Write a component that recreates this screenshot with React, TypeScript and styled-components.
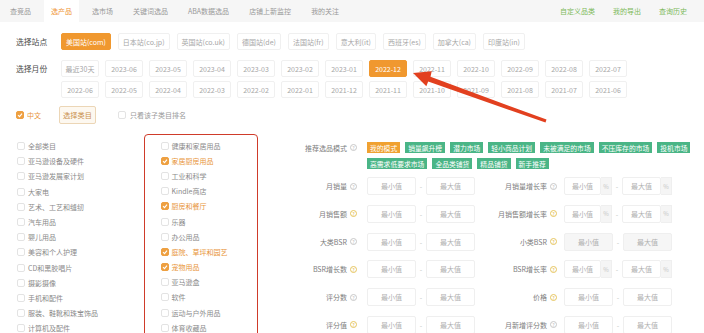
import React from 'react'
import styled, {createGlobalStyle} from 'styled-components'

const GlobalStyle = createGlobalStyle`
  body {
    margin: 0;
    background: #fff;
    font-family: "Noto Sans CJK SC", "Noto Sans", sans-serif;
  }
`

const Page = styled.div`
  position: relative;
  width: 704px;
  height: 333px;
  overflow: hidden;
  background: #fff;
`

const Nav = styled.div`
  display: flex;
  align-items: stretch;
  height: 22px;
  padding: 0 17px 0 3px;
  background: #f6f6f6;
  font-size: 7px;
`
const NavTab = styled.div<{ $active?: boolean }>`
  display: flex;
  align-items: center;
  padding: 0 7px;
  margin-right: 6px;
  color: ${(p) => (p.$active ? '#ef9433' : '#999')};
  background: ${(p) => (p.$active ? '#fff' : 'transparent')};
`
const NavRight = styled.div`
  margin-left: auto;
  display: flex;
  align-items: center;
  gap: 18px;
  color: #7cb95a;
`

const Content = styled.div`
  padding-left: 16px;
`
const FilterRow = styled.div<{ $top: number }>`
  display: flex;
  align-items: flex-start;
  margin-top: ${(p) => p.$top}px;
`
const RowLabel = styled.div`
  width: 45px;
  flex: none;
  line-height: 17px;
  font-size: 7.8px;
  color: #4a4a4a;
`
const SiteList = styled.div`
  display: flex;
  gap: 7px;
`
const Chip = styled.div<{ $active?: boolean }>`
  height: 17px;
  box-sizing: border-box;
  padding: 0 4px;
  display: flex;
  align-items: center;
  justify-content: center;
  border: 1px solid ${(p) => (p.$active ? '#f0982f' : '#f0f0f0')};
  border-radius: 2px;
  background: ${(p) => (p.$active ? '#f0982f' : '#fff')};
  color: ${(p) => (p.$active ? '#fff' : '#a6a6a6')};
  font-size: 7px;
  white-space: nowrap;
`
const MonthGrid = styled.div`
  display: grid;
  grid-template-columns: repeat(13, 38px);
  column-gap: 6px;
  row-gap: 4px;
`

const OptionRow = styled.div`
  display: flex;
  align-items: center;
  height: 18px;
  margin-top: 8px;
  font-size: 7px;
`
const CheckLabel = styled.label<{ $checked?: boolean; $gap?: number }>`
  display: flex;
  align-items: center;
  gap: ${(p) => p.$gap ?? 3}px;
  color: ${(p) => (p.$checked ? '#e8953a' : '#999')};
`
const PickButton = styled.div`
  margin: 0 22px 0 18px;
  width: 37px;
  height: 18px;
  box-sizing: border-box;
  display: flex;
  align-items: center;
  justify-content: center;
  border: 1px solid #ecd6b6;
  border-radius: 2px;
  background: #fdf8f0;
  color: #c98f4c;
  font-size: 7.2px;
`
const Box = styled.span<{ $checked?: boolean }>`
  width: 8px;
  height: 8px;
  flex: none;
  box-sizing: border-box;
  display: inline-flex;
  align-items: center;
  justify-content: center;
  border: 1px solid ${(p) => (p.$checked ? '#eea041' : '#e3e3e3')};
  border-radius: 2px;
  background: ${(p) => (p.$checked ? '#eea041' : '#fff')};
`

const Body = styled.div`
  display: flex;
  margin-top: 10px;
`
const LeftCol = styled.div`
  width: 128px;
  flex: none;
  box-sizing: border-box;
  padding: 4.5px 0 0 1px;
`
const RedBox = styled.div`
  width: 114px;
  flex: none;
  box-sizing: border-box;
  padding: 3px 0 40px 15.5px;
  border: 1.5px solid #cf3b2a;
  border-radius: 4px;
`
const CatItem = styled.div<{ $checked?: boolean }>`
  display: flex;
  align-items: center;
  gap: 3px;
  height: 15.2px;
  font-size: 7px;
  white-space: nowrap;
  color: ${(p) => (p.$checked ? '#e8953a' : '#8a8a8a')};
`

const RightCol = styled.div`
  flex: 1;
  padding-top: 8px;
`
const RecommendRow = styled.div`
  display: flex;
  align-items: flex-start;
`
const FieldLabel = styled.div<{ $pad: number; $w?: number }>`
  width: ${(p) => (p.$w ? `${p.$w}px` : 'auto')};
  box-sizing: border-box;
  display: flex;
  align-items: center;
  justify-content: flex-end;
  gap: 3px;
  padding-right: ${(p) => p.$pad}px;
  height: 11px;
  font-size: 7px;
  color: #7d7d7d;
  white-space: nowrap;
`
const TagList = styled.div`
  width: 330px;
  display: flex;
  flex-wrap: wrap;
  gap: 5px;
`
const Tag = styled.div<{ $mine?: boolean }>`
  height: 11px;
  padding: 0 3px;
  display: flex;
  align-items: center;
  font-size: 6.8px;
  color: #fff;
  background: ${(p) => (p.$mine ? '#f0a131' : '#4ab586')};
  white-space: nowrap;
`
const FormGrid = styled.div`
  margin-top: 8px;
  display: grid;
  grid-template-columns: 109px 109px 88px 109px;
  row-gap: 9.8px;
  align-items: center;
`
const Range = styled.div`
  display: flex;
  align-items: center;
  height: 18px;
`
const Field = styled.div<{ $w: number; $off?: boolean }>`
  width: ${(p) => p.$w}px;
  height: 18px;
  box-sizing: border-box;
  display: flex;
  align-items: center;
  justify-content: center;
  border: 1px solid #efefef;
  border-radius: 2px;
  background: ${(p) => (p.$off ? '#f6f6f6' : '#fff')};
  color: #b0b0b0;
  font-size: 7px;
`
const Addon = styled.div`
  width: 11px;
  height: 18px;
  box-sizing: border-box;
  display: flex;
  align-items: center;
  justify-content: center;
  border: 1px solid #efefef;
  border-left: none;
  background: #f5f5f5;
  color: #c6c6c6;
  font-size: 6px;
`
const Dash = styled.div<{ $w: number }>`
  width: ${(p) => p.$w}px;
  text-align: center;
  color: #c4c4c4;
  font-size: 7px;
`
const Help = styled.span<{ $warm?: boolean }>`
  width: 7px;
  height: 7px;
  box-sizing: border-box;
  display: inline-flex;
  align-items: center;
  justify-content: center;
  border-radius: 50%;
  border: 0.8px solid ${(p) => (p.$warm ? '#e6c55e' : '#c8c8c8')};
  color: ${(p) => (p.$warm ? '#dbb54c' : '#bcbcbc')};
  font-size: 5px;
  line-height: 1;
`
const ArrowLayer = styled.svg`
  position: absolute;
  left: 0;
  top: 0;
  pointer-events: none;
`

const sites = ['美国站(com)', '日本站(co.jp)', '英国站(co.uk)', '德国站(de)', '法国站(fr)', '意大利(it)', '西班牙(es)', '加拿大(ca)', '印度站(in)']
const months = [
  '最近30天', '2023-06', '2023-05', '2023-04', '2023-03', '2023-02', '2023-01', '2022-12', '2022-11', '2022-10', '2022-09', '2022-08', '2022-07',
  '2022-06', '2022-05', '2022-04', '2022-03', '2022-02', '2022-01', '2021-12', '2021-11', '2021-10', '2021-09', '2021-08', '2021-07', '2021-06',
]
const leftCats = ['全部类目', '亚马逊设备及硬件', '亚马逊发展家计划', '大家电', '艺术、工艺和缝纫', '汽车用品', '婴儿用品', '美容和个人护理', 'CD和黑胶唱片', '摄影摄像', '手机和配件', '服装、鞋靴和珠宝饰品', '计算机及配件']
const midCats: [string, boolean][] = [
  ['健康和家居用品', false], ['家居厨房用品', true], ['工业和科学', false], ['Kindle商店', false], ['厨房和餐厅', true], ['乐器', false],
  ['办公用品', false], ['庭院、草坪和园艺', true], ['宠物用品', true], ['亚马逊盒', false], ['软件', false], ['运动与户外用品', false], ['体育收藏品', false],
]
const tags = ['我的模式', '销量飙升榜', '潜力市场', '轻小商品计划', '未被满足的市场', '不压库存的市场', '投机市场', '高需求低要求市场', '全品类铺货', '精品铺货', '新手推荐']

type Kind = 'plain' | 'pct' | 'off'
const rows: { l: string; lw: boolean; r: string; rw: boolean; kind: Kind }[] = [
  {l: '月销量', lw: false, r: '月销量增长率', rw: false, kind: 'pct'},
  {l: '月销售额', lw: true, r: '月销售额增长率', rw: true, kind: 'pct'},
  {l: '大类BSR', lw: false, r: '小类BSR', rw: true, kind: 'off'},
  {l: 'BSR增长数', lw: true, r: 'BSR增长率', rw: true, kind: 'pct'},
  {l: '评分数', lw: false, r: '价格', rw: true, kind: 'plain'},
  {l: '评分值', lw: true, r: '月新增评分数', rw: false, kind: 'plain'},
]

function Check({checked}: { checked?: boolean }) {
  return (
    <Box $checked={checked}>
      {checked && (
        <svg width="6" height="6" viewBox="0 0 6 6">
          <polyline points="1,3.2 2.5,4.6 5,1.6" fill="none" stroke="#fff" strokeWidth="1.1"/>
        </svg>
      )}
    </Box>
  )
}

function RangeInput({kind}: { kind: Kind }) {
  if (kind === 'pct') {
    return (
      <Range>
        <Field $w={37}>最小值</Field>
        <Addon>%</Addon>
        <Dash $w={10}>-</Dash>
        <Field $w={39}>最大值</Field>
        <Addon>%</Addon>
      </Range>
    )
  }
  return (
    <Range>
      <Field $w={49} $off={kind === 'off'}>最小值</Field>
      <Dash $w={10}>-</Dash>
      <Field $w={49} $off={kind === 'off'}>最大值</Field>
    </Range>
  )
}

export default function App() {
  return (
    <Page>
      <GlobalStyle/>
      <Nav>
        {['查竞品', '选产品', '选市场', '关键词选品', 'ABA数据选品', '店铺上新监控', '我的关注'].map((t) => (
          <NavTab key={t} $active={t === '选产品'}>{t}</NavTab>
        ))}
        <NavRight>
          <span>自定义品类</span>
          <span>我的导出</span>
          <span>查询历史</span>
        </NavRight>
      </Nav>

      <Content>
        <FilterRow $top={11}>
          <RowLabel>选择站点</RowLabel>
          <SiteList>
            {sites.map((s, i) => <Chip key={s} $active={i === 0}>{s}</Chip>)}
          </SiteList>
        </FilterRow>

        <FilterRow $top={10}>
          <RowLabel>选择月份</RowLabel>
          <MonthGrid>
            {months.map((m) => <Chip key={m} $active={m === '2022-12'}>{m}</Chip>)}
          </MonthGrid>
        </FilterRow>

        <OptionRow>
          <CheckLabel $checked><Check checked/>中文</CheckLabel>
          <PickButton>选择类目</PickButton>
          <CheckLabel $gap={4}><Check/>只看该子类目排名</CheckLabel>
        </OptionRow>

        <Body>
          <LeftCol>
            {leftCats.map((c) => (
              <CatItem key={c}><Check/>{c}</CatItem>
            ))}
          </LeftCol>
          <RedBox>
            {midCats.map(([c, on]) => (
              <CatItem key={c} $checked={on}><Check checked={on}/>{c}</CatItem>
            ))}
          </RedBox>
          <RightCol>
            <RecommendRow>
              <FieldLabel $pad={10} $w={109}>
                推荐选品模式 <Help>?</Help>
              </FieldLabel>
              <TagList>
                {tags.map((t, i) => <Tag key={t} $mine={i === 0}>{t}</Tag>)}
              </TagList>
            </RecommendRow>
            <FormGrid>
              {rows.map((r) => (
                <React.Fragment key={r.l}>
                  <FieldLabel $pad={10}>{r.l} <Help $warm={r.lw}>?</Help></FieldLabel>
                  <RangeInput kind="plain"/>
                  <FieldLabel $pad={7}>{r.r} <Help $warm={r.rw}>?</Help></FieldLabel>
                  <RangeInput kind={r.kind}/>
                </React.Fragment>
              ))}
            </FormGrid>
          </RightCol>
        </Body>
      </Content>

      <ArrowLayer width="704" height="333" viewBox="0 0 704 333">
        <polygon
          points="413,73 431.7,71.3 430.5,76.8 546.5,119.6 545.5,122.6 428.2,81.6 426.3,86.3"
          fill="#e2401f"
        />
      </ArrowLayer>
    </Page>
  )
}
